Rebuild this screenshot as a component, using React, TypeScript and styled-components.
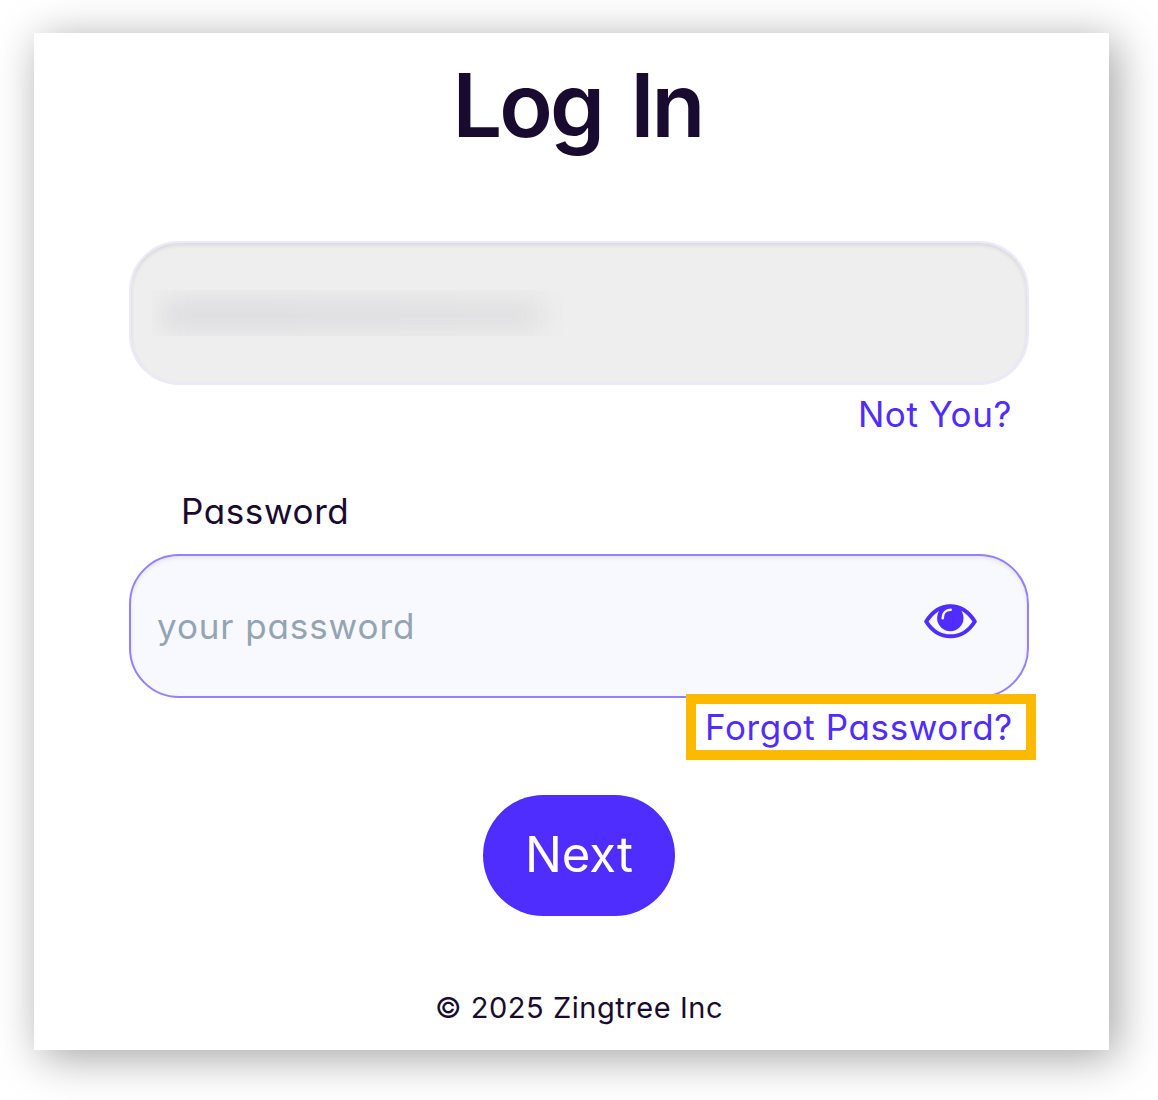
import { FC, useState } from 'react';
import styled, { createGlobalStyle } from 'styled-components';

const colors = {
  ink: '#190b30',
  violet: '#4f2cff',
  violetBorder: '#967fff',
  lilacBorder: '#ece8ff',
  placeholder: '#93a4b3',
  highlight: '#fbb900',
};

const GlobalStyle = createGlobalStyle`
  * {
    box-sizing: border-box;
  }

  body {
    margin: 0;
    background: #fff;
    color: ${colors.ink};
    font-family: Inter, 'Open Sans', sans-serif;
    font-feature-settings: 'cv11';
  }
`;

const Page = styled.main`
  height: 1100px;
  padding: 33px 49px 50px 34px;
  overflow: hidden;
`;

const Card = styled.form`
  display: flex;
  flex-direction: column;
  height: 1017px;
  padding: 0 80px 0 95px;
  background: #fff;
  box-shadow: 7px 7px 42px rgba(0, 0, 0, 0.37);
`;

const Title = styled.h1`
  margin: 19px 0 0;
  height: 189px;
  font-size: 88px;
  line-height: 107px;
  font-weight: 600;
  letter-spacing: -3px;
  word-spacing: 9px;
  text-align: center;
  text-indent: -3px;
`;

const Field = styled.div<{ $disabled?: boolean }>`
  display: flex;
  align-items: center;
  flex-shrink: 0;
  height: 144px;
  padding: 0 50px 0 26px;
  border: 2px solid ${({ $disabled }) => ($disabled ? colors.lilacBorder : colors.violetBorder)};
  border-radius: 50px;
  background: ${({ $disabled }) => ($disabled ? '#eee' : '#f8f9ff')};
  box-shadow: inset 0 2px 4px rgba(0, 0, 0, ${({ $disabled }) => ($disabled ? 0.1 : 0.08)});
`;

const HiddenEmail = styled.div`
  width: 411px;
  height: 46px;
  margin-left: -5px;
  overflow: hidden;

  &::before {
    content: '';
    display: block;
    width: 380px;
    height: 32px;
    margin: 9px 0 0 11px;
    background: linear-gradient(90deg, #dddde0, #dedee1 55%, #e1e1e2);
    filter: blur(12px);
  }
`;

const Input = styled.input`
  flex: 1;
  min-width: 0;
  padding: 0;
  border: 0;
  outline: 0;
  background: transparent;
  color: ${colors.ink};
  font: inherit;
  font-size: 35px;
  font-feature-settings: inherit;
  letter-spacing: 0.9px;

  &::placeholder {
    color: ${colors.placeholder};
    opacity: 1;
  }
`;

const Label = styled.label`
  height: 76px;
  padding-left: 52px;
  font-size: 35px;
  line-height: 66px;
  letter-spacing: 0.6px;
`;

const Link = styled.a`
  color: ${colors.violet};
  font-size: 35px;
  line-height: 40px;
  letter-spacing: 0.6px;
  white-space: nowrap;
  cursor: pointer;
`;

const NotYou = styled.div`
  display: flex;
  justify-content: flex-end;
  height: 93px;
  padding: 9px 17px 0 0;
`;

const Highlight = styled.div`
  position: relative;
  align-self: flex-end;
  display: flex;
  width: 350px;
  height: 66px;
  margin: -4px -7px 0 0;
  padding: 3px 0 0 9px;
  border: 10px solid ${colors.highlight};
  background: #fff;
`;

const EyeButton = styled.button`
  display: flex;
  margin-top: -10px;
  padding: 0;
  border: 0;
  background: none;
  color: ${colors.violet};
  cursor: pointer;
`;

const NextButton = styled.button`
  align-self: center;
  flex-shrink: 0;
  width: 192px;
  height: 121px;
  margin-top: 35px;
  padding: 0 0 2px;
  border: 0;
  border-radius: 61px;
  background: ${colors.violet};
  color: #fff;
  font: inherit;
  font-size: 49px;
  cursor: pointer;
`;

const Footer = styled.footer`
  margin-top: 74px;
  font-size: 29px;
  line-height: 36px;
  letter-spacing: 0.55px;
  text-align: center;
`;

const EyeIcon: FC = () => (
  <svg width="53" height="35" viewBox="0 0 53 35" fill="none">
    <path
      d="M2.2 17.5C8 8.2 16.5 2.2 26.5 2.2S45 8.2 50.8 17.5C45 26.8 36.5 32.3 26.5 32.3S8 26.8 2.2 17.5Z"
      stroke="currentColor"
      strokeWidth="4"
      strokeLinejoin="round"
    />
    <circle cx="26.3" cy="14" r="13.2" fill="currentColor" />
    <path d="M18.7 14.2c0-5 3.2-8.4 8-8.4" stroke="#f8f9ff" strokeWidth="2.6" strokeLinecap="round" />
  </svg>
);

const App: FC = () => {
  const [visible, setVisible] = useState(false);

  return (
    <>
      <GlobalStyle />
      <Page>
        <Card onSubmit={(e) => e.preventDefault()}>
          <Title>Log In</Title>

          <Field $disabled>
            <HiddenEmail />
          </Field>
          <NotYou>
            <Link>Not You?</Link>
          </NotYou>

          <Label htmlFor="password">Password</Label>
          <Field>
            <Input id="password" type={visible ? 'text' : 'password'} placeholder="your password" />
            <EyeButton type="button" aria-label="Show password" onClick={() => setVisible(!visible)}>
              <EyeIcon />
            </EyeButton>
          </Field>
          <Highlight>
            <Link>Forgot Password?</Link>
          </Highlight>

          <NextButton type="submit">Next</NextButton>
          <Footer>© 2025 Zingtree Inc</Footer>
        </Card>
      </Page>
    </>
  );
};

export default App;
